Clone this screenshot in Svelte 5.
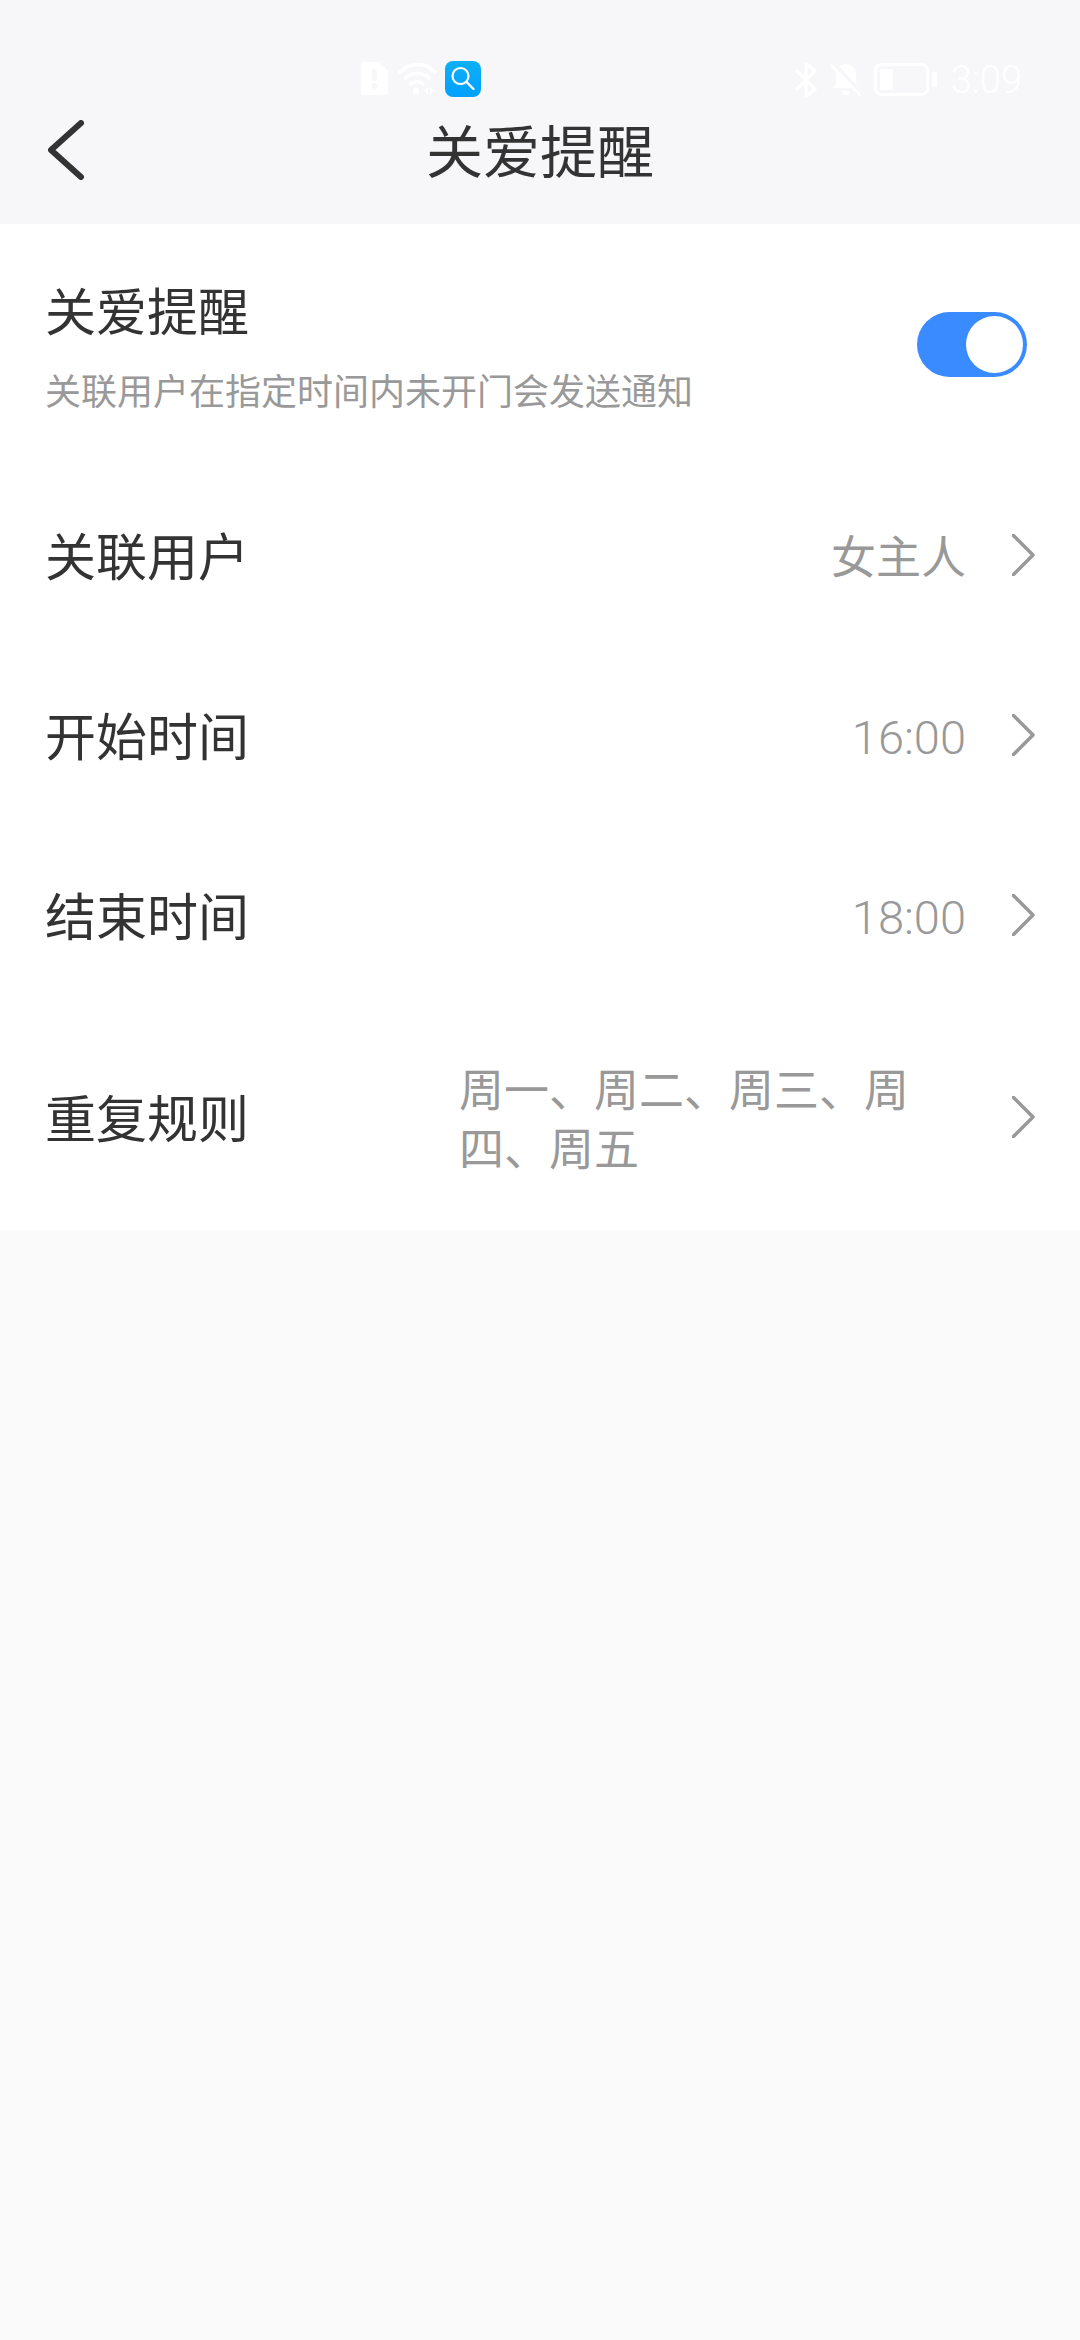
<script>
  const rows = [
    { label: '关联用户', value: '女主人', time: false },
    { label: '开始时间', value: '16:00', time: true },
    { label: '结束时间', value: '18:00', time: true }
  ];
</script>

<div class="page">
  <header class="header">
    <div class="status">
      <div class="notify">
        <svg class="doc" width="27" height="33" viewBox="0 0 27 33">
          <path fill="#fff" d="M3 0h15l9 9v21a3 3 0 0 1-3 3H3a3 3 0 0 1-3-3V3a3 3 0 0 1 3-3z" />
          <rect x="11" y="7" width="5" height="12" rx="2" fill="#f7f7f9" />
          <circle cx="13.5" cy="24" r="2.8" fill="#f7f7f9" />
        </svg>
        <svg class="wifi" width="39" height="33" viewBox="0 0 39 33">
          <g fill="none" stroke="#fff" stroke-width="3.4" stroke-linecap="round">
            <path d="M2 10C12 0 28 0 37 10" />
            <path d="M7.500 16C14 10 25 10 31 16" />
            <path d="M13 22c4-3 8-3 12 0" />
          </g>
          <circle cx="18" cy="29" r="3.200" fill="#fff" />
          <path fill="#fff" d="M26 29l4-4v8zM32 25l4 4-4 4z" />
        </svg>
        <svg class="app" width="36" height="36" viewBox="0 0 36 36">
          <defs>
            <linearGradient id="appblue" x1="0" y1="0" x2="0" y2="1">
              <stop offset="0" stop-color="#0fb0f5" />
              <stop offset="1" stop-color="#00a0ff" />
            </linearGradient>
          </defs>
          <rect width="36" height="36" rx="8" fill="url(#appblue)" />
          <circle cx="15.500" cy="15" r="8" fill="none" stroke="#fff" stroke-width="2.200" />
          <path d="M21.500 21l7 7" stroke="#fff" stroke-width="2.400" stroke-linecap="round" />
        </svg>
      </div>
      <div class="system">
        <svg width="22" height="36" viewBox="0 0 22 36">
          <path fill="none" stroke="#fff" stroke-width="3.200" stroke-linecap="round" stroke-linejoin="round"
            d="M2 9l18 18-9 8V1l9 8L2 27" />
        </svg>
        <svg width="32" height="33" viewBox="0 0 32 33">
          <path fill="#fff" d="M16 1c6 0 10 4 10 11v8l3 5H3l3-5v-8C6 5 10 1 16 1z" />
          <path fill="#fff" d="M12 28h8a4 4 0 0 1-8 0z" />
          <path d="M3 1l28 30" stroke="#f7f7f9" stroke-width="6" />
          <path d="M2 3l28 29" stroke="#fff" stroke-width="2.600" stroke-linecap="round" />
        </svg>
        <svg width="63" height="33" viewBox="0 0 63 33">
          <rect x="1.500" y="1.500" width="52" height="30" rx="6" fill="none" stroke="#fff" stroke-width="3" />
          <rect x="6" y="6" width="13" height="21" rx="2" fill="#fff" />
          <rect x="58" y="9" width="5" height="15" rx="1.500" fill="#fff" />
        </svg>
        <span class="time">3:09</span>
      </div>
    </div>
    <div class="nav">
      <svg class="back" width="36" height="60" viewBox="0 0 36 60">
        <path d="M33 3L3 30l30 27" fill="none" stroke="#333" stroke-width="6" stroke-linecap="round" stroke-linejoin="round" />
      </svg>
      <h1>关爱提醒</h1>
      <span></span>
    </div>
  </header>

  <section class="card">
    <div class="care">
      <div>
        <div class="label">关爱提醒</div>
        <div class="hint">关联用户在指定时间内未开门会发送通知</div>
      </div>
      <div class="toggle"><span class="knob"></span></div>
    </div>

    {#each rows as row (row.label)}
      <div class="row">
        <div class="label">{row.label}</div>
        <div class="value" class:digits={row.time}>{row.value}</div>
        <svg class="chevron" width="23" height="42" viewBox="0 0 23 42">
          <path d="M1.500 1.500L21 21 1.500 40.500" fill="none" stroke="#999" stroke-width="3.500" stroke-linecap="round" stroke-linejoin="round" />
        </svg>
      </div>
    {/each}

    <div class="row repeat">
      <div class="label">重复规则</div>
      <div class="value multi">周一、周二、周三、周四、周五</div>
      <svg class="chevron" width="23" height="42" viewBox="0 0 23 42">
        <path d="M1.500 1.500L21 21 1.500 40.500" fill="none" stroke="#999" stroke-width="3.500" stroke-linecap="round" stroke-linejoin="round" />
      </svg>
    </div>
  </section>
</div>

<style>
  :global(body) {
    margin: 0;
    background: #fafafa;
  }

  .page {
    width: 1080px;
    height: 2340px;
    background: #fafafa;
    overflow: hidden;
    font-family: Roboto, "Noto Sans CJK SC", sans-serif;
  }

  .header {
    height: 224px;
    background: #f7f7f9;
    box-sizing: border-box;
  }

  .status {
    height: 100px;
    box-sizing: border-box;
    padding: 62px 58px 0 361px;
    display: flex;
    justify-content: space-between;
    align-items: flex-start;
  }

  .notify {
    display: flex;
    gap: 10px;
  }

  .app {
    margin-left: -2px;
    margin-top: -1px;
  }

  .system {
    display: flex;
    align-items: flex-start;
  }

  .system svg:nth-child(2) {
    margin-left: 13px;
    margin-top: 1px;
  }

  .system svg:nth-child(3) {
    margin-left: 12px;
    margin-top: 1px;
  }

  .time {
    margin-left: 14px;
    color: #fff;
    font-size: 38px;
    font-weight: 300;
    line-height: 36px;
  }

  .nav {
    padding: 0 48px;
    height: 104px;
    display: grid;
    grid-template-columns: 1fr auto 1fr;
    align-items: center;
  }

  .back {
    margin-bottom: 5px;
  }

  h1 {
    margin: 0;
    padding-top: 3px;
    font-size: 57px;
    font-weight: 400;
    color: #333;
    line-height: 72px;
  }

  .card {
    background: #fff;
    height: 1006px;
  }

  .care {
    height: 242px;
    box-sizing: border-box;
    padding: 60px 53px 0 45px;
    display: flex;
    justify-content: space-between;
    align-items: flex-start;
  }

  .label {
    font-size: 51px;
    line-height: 60px;
    color: #333;
  }

  .hint {
    margin-top: 27px;
    font-size: 36px;
    line-height: 44px;
    color: #999;
  }

  .toggle {
    margin-top: 28px;
    width: 110px;
    height: 65px;
    border-radius: 33px;
    background: #3a8bff;
    position: relative;
  }

  .knob {
    position: absolute;
    right: 4px;
    top: 4px;
    width: 57px;
    height: 57px;
    border-radius: 50%;
    background: #fff;
  }

  .row {
    height: 180px;
    padding: 0 45px;
    display: flex;
    align-items: center;
  }

  .row .label {
    flex: 1;
    padding-top: 5px;
  }

  .value {
    padding-top: 5px;
    font-size: 45px;
    line-height: 59px;
    color: #999;
    margin-right: 46px;
  }

  .digits {
    padding-top: 3px;
    font-size: 47px;
    font-weight: 300;
  }

  .chevron {
    margin-bottom: 3px;
  }

  .repeat {
    height: 224px;
  }

  .multi {
    width: 460px;
    margin-right: 93px;
  }
</style>
